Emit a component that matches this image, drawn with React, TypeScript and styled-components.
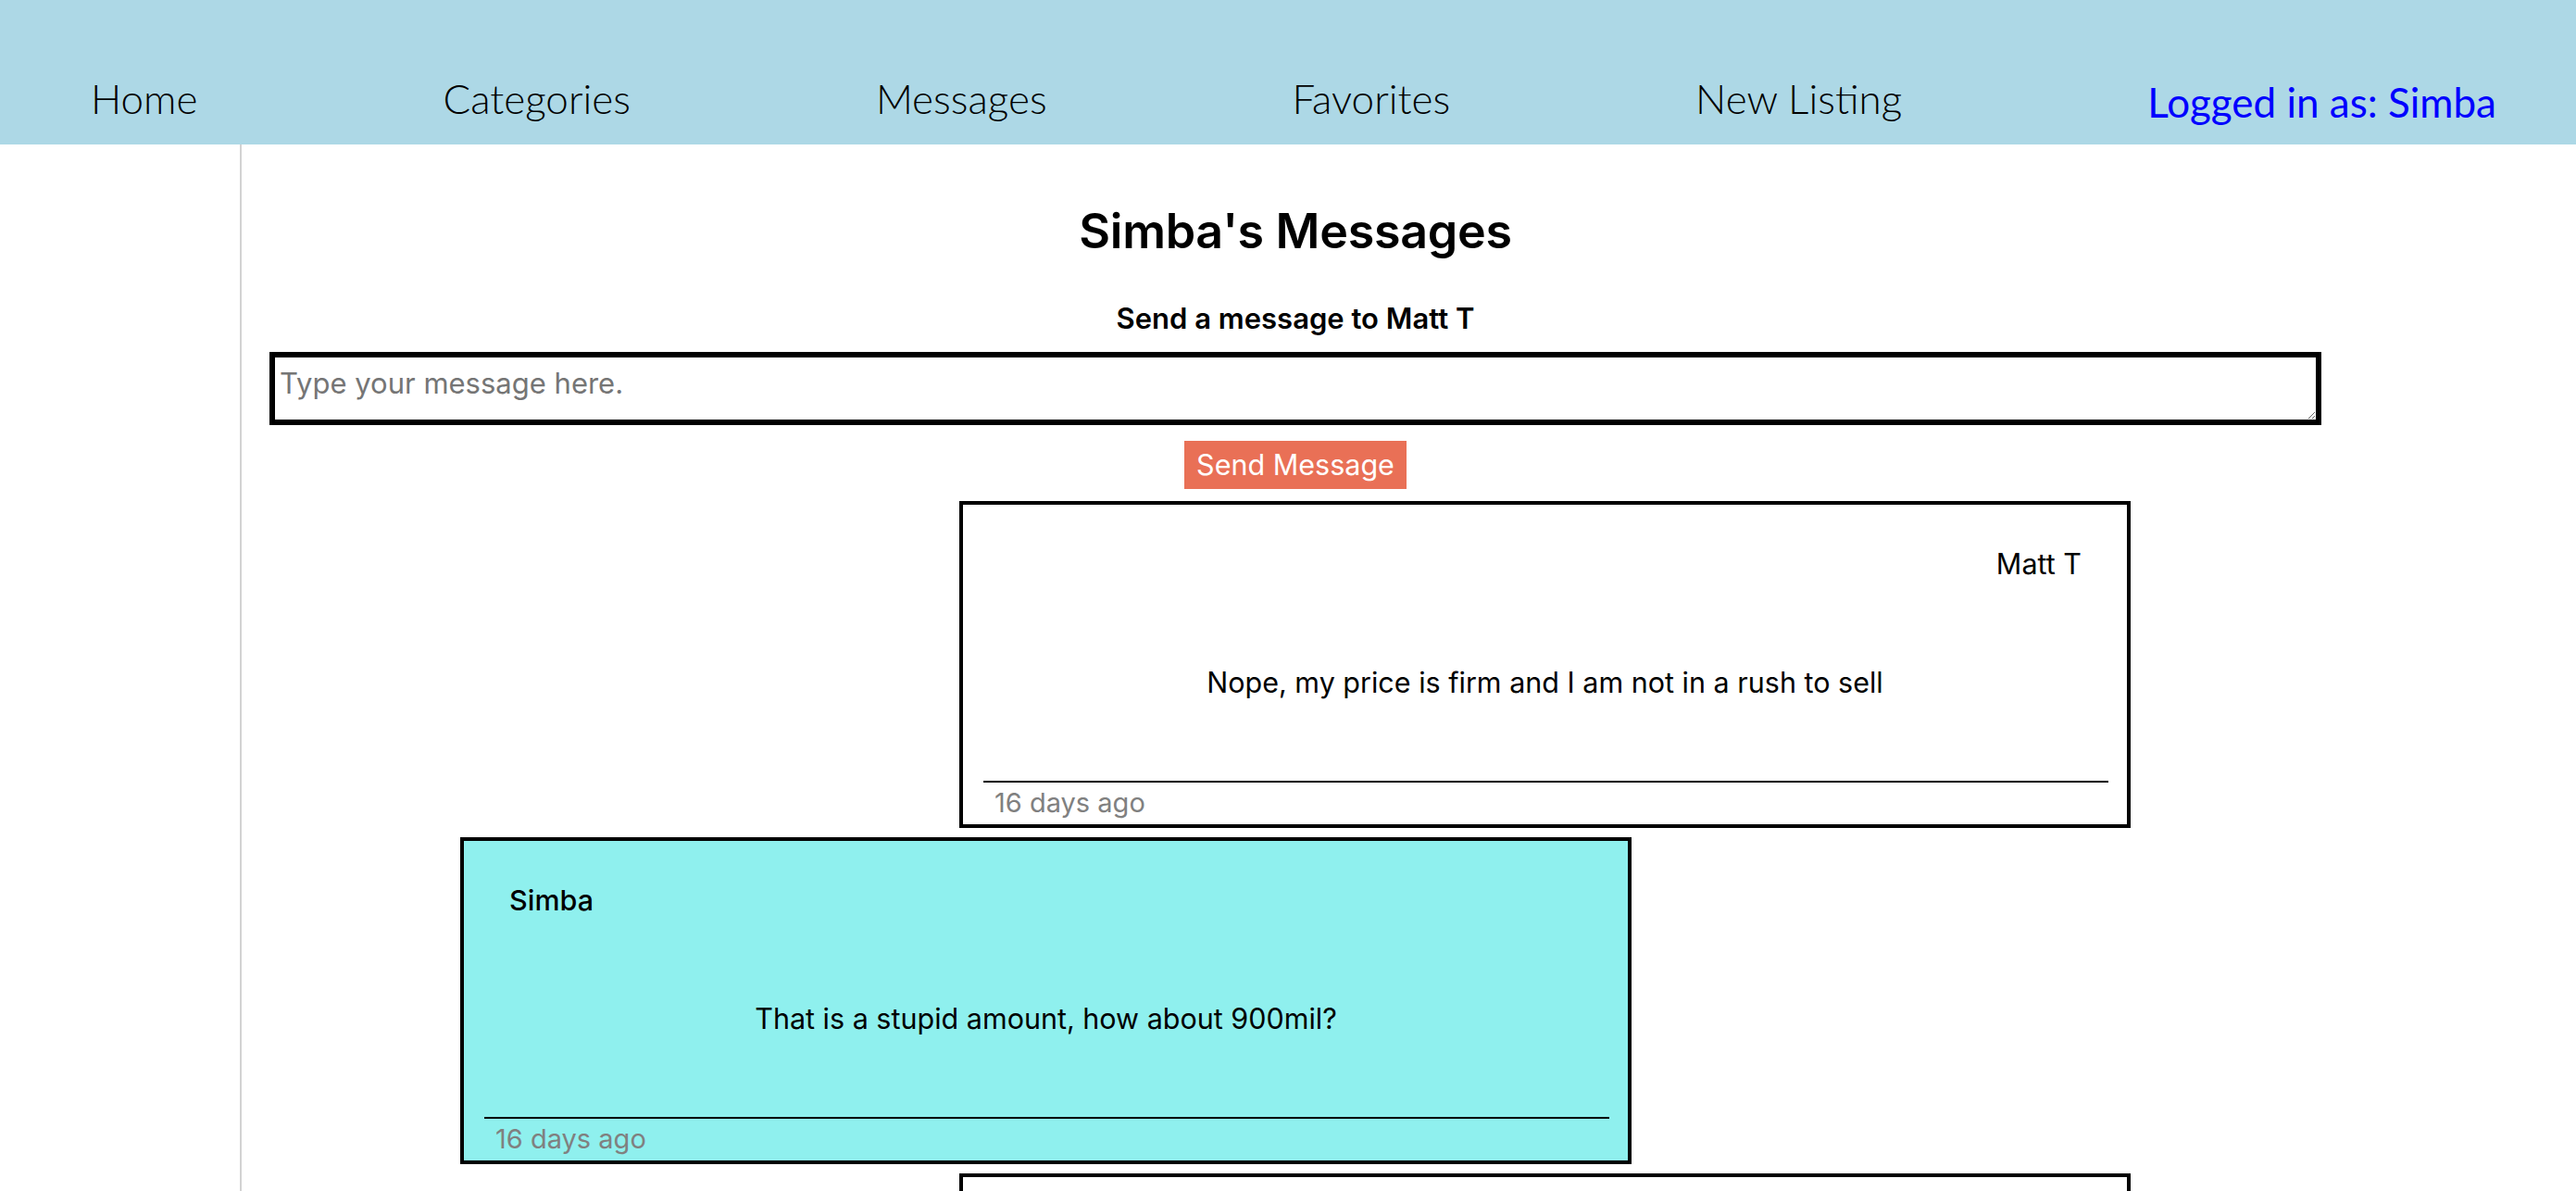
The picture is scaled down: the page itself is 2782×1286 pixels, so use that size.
import React from 'react';
import styled, { createGlobalStyle } from 'styled-components';

const GlobalStyle = createGlobalStyle`
  html, body {
    margin: 0;
    padding: 0;
    background: #fff;
  }
  body {
    font-family: Inter, "Liberation Sans", sans-serif;
    color: #000;
  }
  * {
    box-sizing: border-box;
  }
`;

const NavBar = styled.nav`
  height: 156px;
  background: #add8e6;
  display: flex;
  justify-content: space-between;
  align-items: flex-start;
  padding: 80px 86px 0 98px;
`;

const NavLink = styled.a<{ highlight?: boolean }>`
  font-family: Lato, "Open Sans", sans-serif;
  font-weight: ${p => (p.highlight ? 400 : 300)};
  font-size: 44px;
  line-height: 1.2;
  color: ${p => (p.highlight ? '#0000ff' : '#000')};
  text-decoration: none;
  margin-top: ${p => (p.highlight ? '4px' : '0')};
  white-space: nowrap;
`;

const Layout = styled.div`
  display: flex;
  min-height: 1130px;
`;

const Sidebar = styled.aside`
  width: 261px;
  flex: none;
  border-right: 2px solid #d3d3d3;
`;

const Main = styled.main`
  width: 2276px;
  padding: 0 30px;
  display: flex;
  flex-direction: column;
  align-items: center;
`;

const Title = styled.h1`
  margin: 61px 0 0;
  font-size: 52px;
  line-height: 66px;
  font-weight: 600;
  letter-spacing: -0.3px;
`;

const SendTo = styled.h4`
  margin: 42px 0 0;
  font-size: 31px;
  line-height: 38px;
  font-weight: 600;
`;

const MessageInput = styled.textarea`
  margin-top: 17px;
  width: 100%;
  height: 79px;
  border: 6px solid #000;
  padding: 9px 5px 4px;
  font-family: Inter, "Liberation Sans", sans-serif;
  font-size: 31px;
  line-height: 38px;
  outline: none;

  &::placeholder {
    color: #757575;
  }
`;

const SendButton = styled.button`
  margin-top: 17px;
  height: 52px;
  padding: 0 13px;
  border: none;
  background: #e97056;
  color: #fff;
  font-family: Inter, "Liberation Sans", sans-serif;
  font-size: 30.5px;
  line-height: 52px;
`;

const Thread = styled.div`
  margin-top: 13px;
  width: 100%;
  padding: 0 206px;
  display: flex;
  flex-direction: column;
  gap: 10px;
`;

const Bubble = styled.div<{ mine?: boolean }>`
  width: 1265px;
  align-self: ${p => (p.mine ? 'flex-start' : 'flex-end')};
  background: ${p => (p.mine ? '#8ff0ee' : '#fff')};
  border: 4px solid #000;
  display: flex;
  flex-direction: column;
`;

const Sender = styled.div<{ mine?: boolean }>`
  padding: 45px 49px 0;
  font-size: 30.5px;
  line-height: 38px;
  font-weight: ${p => (p.mine ? 500 : 400)};
  text-align: ${p => (p.mine ? 'left' : 'right')};
`;

const Body = styled.p`
  margin: 90px 0 87px;
  font-size: 30.5px;
  line-height: 38px;
  text-align: center;
`;

const Divider = styled.hr`
  margin: 0 20px 0 22px;
  border: none;
  border-top: 2px solid #000;
`;

const Stamp = styled.div`
  padding: 3px 34px 4px;
  font-size: 29px;
  line-height: 38px;
  color: #808080;
`;

type Msg = { from: string; text: string; ago: string; mine: boolean };

const messages: Msg[] = [
  { from: 'Matt T', text: 'Nope, my price is firm and I am not in a rush to sell', ago: '16 days ago', mine: false },
  { from: 'Simba', text: 'That is a stupid amount, how about 900mil?', ago: '16 days ago', mine: true },
  { from: 'Matt T', text: 'The asking price is 1 billion', ago: '16 days ago', mine: false },
];

export default function App() {
  return (
    <>
      <GlobalStyle />
      <NavBar>
        <NavLink href="#">Home</NavLink>
        <NavLink href="#">Categories</NavLink>
        <NavLink href="#">Messages</NavLink>
        <NavLink href="#">Favorites</NavLink>
        <NavLink href="#">New Listing</NavLink>
        <NavLink href="#" highlight>Logged in as: Simba</NavLink>
      </NavBar>
      <Layout>
        <Sidebar />
        <Main>
          <Title>Simba's Messages</Title>
          <SendTo>Send a message to Matt T</SendTo>
          <MessageInput placeholder="Type your message here." />
          <SendButton>Send Message</SendButton>
          <Thread>
            {messages.map((m, i) => (
              <Bubble key={i} mine={m.mine}>
                <Sender mine={m.mine}>{m.from}</Sender>
                <Body>{m.text}</Body>
                <Divider />
                <Stamp>{m.ago}</Stamp>
              </Bubble>
            ))}
          </Thread>
        </Main>
      </Layout>
    </>
  );
}
